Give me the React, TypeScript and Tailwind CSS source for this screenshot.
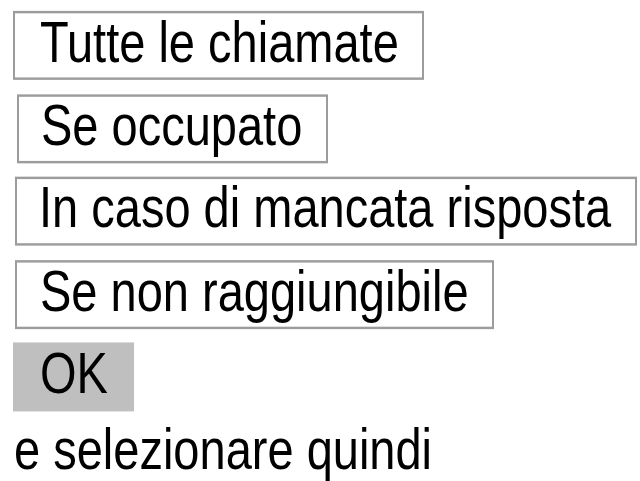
const options = [
  { label: "Tutte le chiamate", className: "ml-[13px] pl-[25px] pr-[23px]" },
  { label: "Se occupato", className: "ml-[17px] pl-[22px] pr-[24px]" },
  { label: "In caso di mancata risposta", className: "ml-[15px] pl-[22px] pr-[24px]" },
  { label: "Se non raggiungibile", className: "ml-[15px] pl-[23px] pr-[23px]" },
];

export default function App() {
  return (
    <div className="h-[481px] w-[640px] overflow-hidden bg-white">
      {/* Liberation Sans has no narrow cut, so the text is set smaller and stretched tall */}
      <div className="origin-top scale-y-[1.21] pt-[9px] font-['Liberation_Sans',Arial,sans-serif] text-[47px] leading-[52.5px] whitespace-nowrap text-black">
        <div className="flex flex-col items-start gap-[11.5px]">
          {options.map((item) => (
            <div
              key={item.label}
              className={`border-2 border-[#9c9c9c] pb-[5.5px] leading-[47.5px] ${item.className}`}
            >
              {item.label}
            </div>
          ))}
          <div className="ml-[13px] bg-[#bfbfbf] pb-[7px] pl-[27px] pr-[26px] pt-[2px] leading-[47.5px]">OK</div>
        </div>
        <p className="ml-[14px] mt-[6px]">e selezionare quindi</p>
      </div>
    </div>
  );
}
